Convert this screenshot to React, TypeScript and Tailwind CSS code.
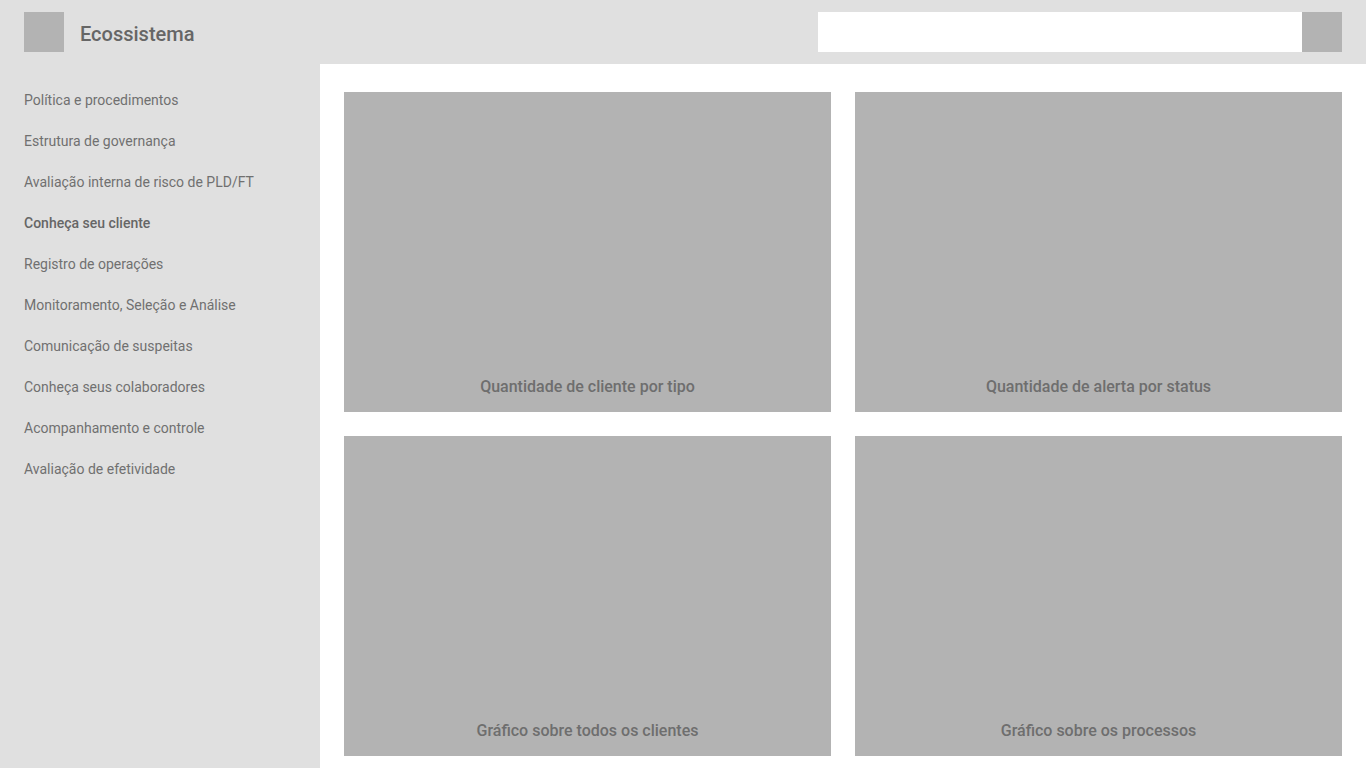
const navItems = [
  { label: "Política e procedimentos" },
  { label: "Estrutura de governança" },
  { label: "Avaliação interna de risco de PLD/FT" },
  { label: "Conheça seu cliente", active: true },
  { label: "Registro de operações" },
  { label: "Monitoramento, Seleção e Análise" },
  { label: "Comunicação de suspeitas" },
  { label: "Conheça seus colaboradores" },
  { label: "Acompanhamento e controle" },
  { label: "Avaliação de efetividade" },
];

const cards = [
  "Quantidade de cliente por tipo",
  "Quantidade de alerta por status",
  "Gráfico sobre todos os clientes",
  "Gráfico sobre os processos",
];

export default function App() {
  return (
    <div className="min-h-screen flex flex-col bg-white" style={{ fontFamily: "Roboto, 'Liberation Sans', sans-serif" }}>
      {/* Header */}
      <header className="h-16 shrink-0 bg-[#e0e0e0] flex items-center px-6">
        <div className="w-10 h-10 bg-[#b3b3b3]" />
        <span className="ml-4 text-[20px] font-medium text-[#666666] mt-[3px]">Ecossistema</span>
        <div className="ml-auto flex">
          <input className="w-[484px] h-10 bg-white outline-none px-3 text-sm" />
          <button className="w-10 h-10 bg-[#b3b3b3]" />
        </div>
      </header>

      <div className="flex flex-1">
        {/* Sidebar */}
        <nav className="w-80 shrink-0 bg-[#e0e0e0] pt-4">
          {navItems.map((item) => (
            <div
              key={item.label}
              className={`h-[41px] flex items-center px-6 text-[14px] ${item.active ? "font-medium text-[#666666]" : "text-[#707070]"}`}
            >
              {item.label}
            </div>
          ))}
        </nav>

        {/* Content */}
        <main className="flex-1 px-6 pt-7 pb-6">
          <div className="grid grid-cols-2 gap-6">
            {cards.map((title) => (
              <div key={title} className="h-80 bg-[#b3b3b3] flex items-end justify-center pb-[13px]">
                <span className="text-[16px] font-medium text-[#6e6e6e]">{title}</span>
              </div>
            ))}
          </div>
        </main>
      </div>
    </div>
  );
}
